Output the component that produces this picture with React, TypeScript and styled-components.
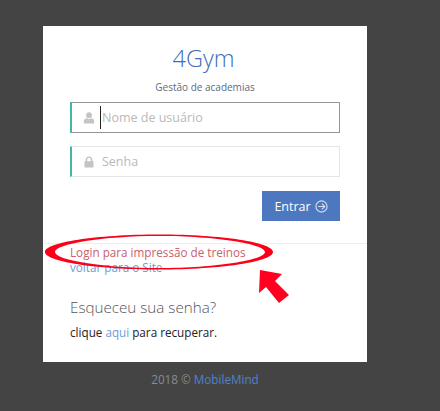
import { createGlobalStyle, styled } from 'styled-components';

const GlobalStyle = createGlobalStyle`
  html, body {
    margin: 0;
    padding: 0;
    background: #444444;
    font-family: 'Open Sans', 'Liberation Sans', sans-serif;
  }
`;

const Page = styled.div`
  position: relative;
  width: 440px;
  height: 411px;
  padding: 26px 0 0 43px;
  box-sizing: border-box;
  overflow: hidden;
`;

const Card = styled.div`
  width: 324px;
  height: 336px;
  background: #ffffff;
  box-sizing: border-box;
  padding-top: 15px;
`;

const Title = styled.h1`
  margin: 0;
  padding-right: 3px;
  font-size: 23.5px;
  line-height: 34px;
  font-weight: 300;
  color: #3f6dbb;
  text-align: center;
`;

const Subtitle = styled.p`
  margin: 5px 0 0;
  font-size: 10px;
  line-height: 14px;
  color: #5b6b80;
  text-align: center;
`;

const Form = styled.form`
  display: flex;
  flex-direction: column;
  gap: 13px;
  margin: 8px 27px 0;
`;

const Field = styled.div<{ $focused?: boolean }>`
  display: flex;
  align-items: center;
  height: 31px;
  box-sizing: border-box;
  border: 1px solid ${({ $focused }) => ($focused ? '#959595' : '#e5e5e5')};
  border-left: 2px solid #44b6a8;
  padding-left: 11px;
`;

const FieldIcon = styled.svg`
  width: 12px;
  height: 12px;
  fill: #c4c4c4;
  flex: none;
`;

const Placeholder = styled.span<{ $focused?: boolean }>`
  margin-left: 5px;
  padding-left: 1px;
  height: 23px;
  font-size: 12.5px;
  line-height: 24px;
  color: #b9b9b9;
  border-left: 1px solid ${({ $focused }) => ($focused ? '#222222' : 'transparent')};
`;

const Actions = styled.div`
  display: flex;
  justify-content: flex-end;
  margin-top: 1px;
`;

const SubmitButton = styled.button`
  display: flex;
  align-items: center;
  justify-content: center;
  gap: 4px;
  width: 78px;
  height: 30px;
  padding: 0;
  border: 0;
  background: #4d78bf;
  color: #ffffff;
  font-family: inherit;
  font-size: 12.5px;
  font-weight: 400;
`;

const ArrowIcon = styled.svg`
  width: 13px;
  height: 13px;
  fill: none;
  stroke: #d5dff0;
  stroke-width: 1.2;
`;

const Divider = styled.hr`
  margin: 22px 0 0;
  border: 0;
  border-top: 1px solid #eeeeee;
`;

const LinkList = styled.div`
  display: flex;
  flex-direction: column;
  margin: 1px 27px 0;
  font-size: 11.7px;
  line-height: 15px;
`;

const TextLink = styled.a<{ $color?: string }>`
  color: ${({ $color }) => $color ?? '#6f9bd8'};
  text-decoration: none;
`;

const Recover = styled.div`
  margin: 22px 27px 0;
`;

const RecoverTitle = styled.h4`
  margin: 0;
  font-size: 15.2px;
  line-height: 20px;
  font-weight: 300;
  color: #555555;
`;

const RecoverText = styled.p`
  margin: 8px 0 0;
  font-size: 11.7px;
  line-height: 15px;
  color: #222222;
`;

const Footer = styled.div`
  width: 324px;
  margin-top: 10px;
  font-size: 11.7px;
  line-height: 15px;
  color: #8a8a8a;
  text-align: center;
`;

const FooterLink = styled.a`
  color: #4f82d0;
  text-decoration: none;
`;

// red marks drawn on top of the screenshot
const Annotation = styled.svg`
  position: absolute;
  left: 0;
  top: 0;
  pointer-events: none;
`;

export default function App() {
  return (
    <>
      <GlobalStyle />
      <Page>
        <Card>
          <Title>4Gym</Title>
          <Subtitle>Gestão de academias</Subtitle>
          <Form>
            <Field $focused>
              <FieldIcon viewBox="0 0 12 12">
                <circle cx="6" cy="3.2" r="2.9" />
                <path d="M0.8 11.5V9.2C0.8 7.3 2.4 6.3 3.8 6.2C4.4 6.7 5.2 7 6 7C6.8 7 7.6 6.7 8.2 6.2C9.6 6.3 11.2 7.3 11.2 9.2V11.5Z" />
              </FieldIcon>
              <Placeholder $focused>Nome de usuário</Placeholder>
            </Field>
            <Field>
              <FieldIcon viewBox="0 0 12 12">
                <path d="M1.5 5.2H2.6V3.8C2.6 1.9 4.1 0.6 6 0.6C7.9 0.6 9.4 1.9 9.4 3.8V5.2H10.5V11.5H1.5ZM4.2 5.2H7.8V3.8C7.8 2.8 7 2.1 6 2.1C5 2.1 4.2 2.8 4.2 3.8Z" />
              </FieldIcon>
              <Placeholder>Senha</Placeholder>
            </Field>
            <Actions>
              <SubmitButton type="button">
                Entrar
                <ArrowIcon viewBox="0 0 14 14">
                  <circle cx="7" cy="7" r="6" />
                  <path d="M3.5 7H10.5M7.5 4L10.5 7L7.5 10" />
                </ArrowIcon>
              </SubmitButton>
            </Actions>
          </Form>
          <Divider />
          <LinkList>
            <TextLink href="#" $color="#c9606c">Login para impressão de treinos</TextLink>
            <TextLink href="#">voltar para o Site</TextLink>
          </LinkList>
          <Recover>
            <RecoverTitle>Esqueceu sua senha?</RecoverTitle>
            <RecoverText>
              clique <TextLink href="#">aqui</TextLink> para recuperar.
            </RecoverText>
          </Recover>
        </Card>
        <Footer>
          2018 © <FooterLink href="#">MobileMind</FooterLink>
        </Footer>
        <Annotation width="440" height="411" viewBox="0 0 440 411">
          <path
            fillRule="evenodd"
            fill="#fb0018"
            d="M45 252C45 242.5 96 234.5 159 234.5C222 234.5 273 242.5 273 252C273 261.5 222 269.5 159 269.5C96 269.5 45 261.5 45 252ZM55 252C55 260 102 268 159 268C216 268 265 260 265 252C265 244 216 236 159 236C102 236 55 244 55 252Z"
          />
          <path
            fill="#ff0021"
            d="M260 270L282 274L275 281L289 295L279 303L266 287L259 293Z"
          />
        </Annotation>
      </Page>
    </>
  );
}
